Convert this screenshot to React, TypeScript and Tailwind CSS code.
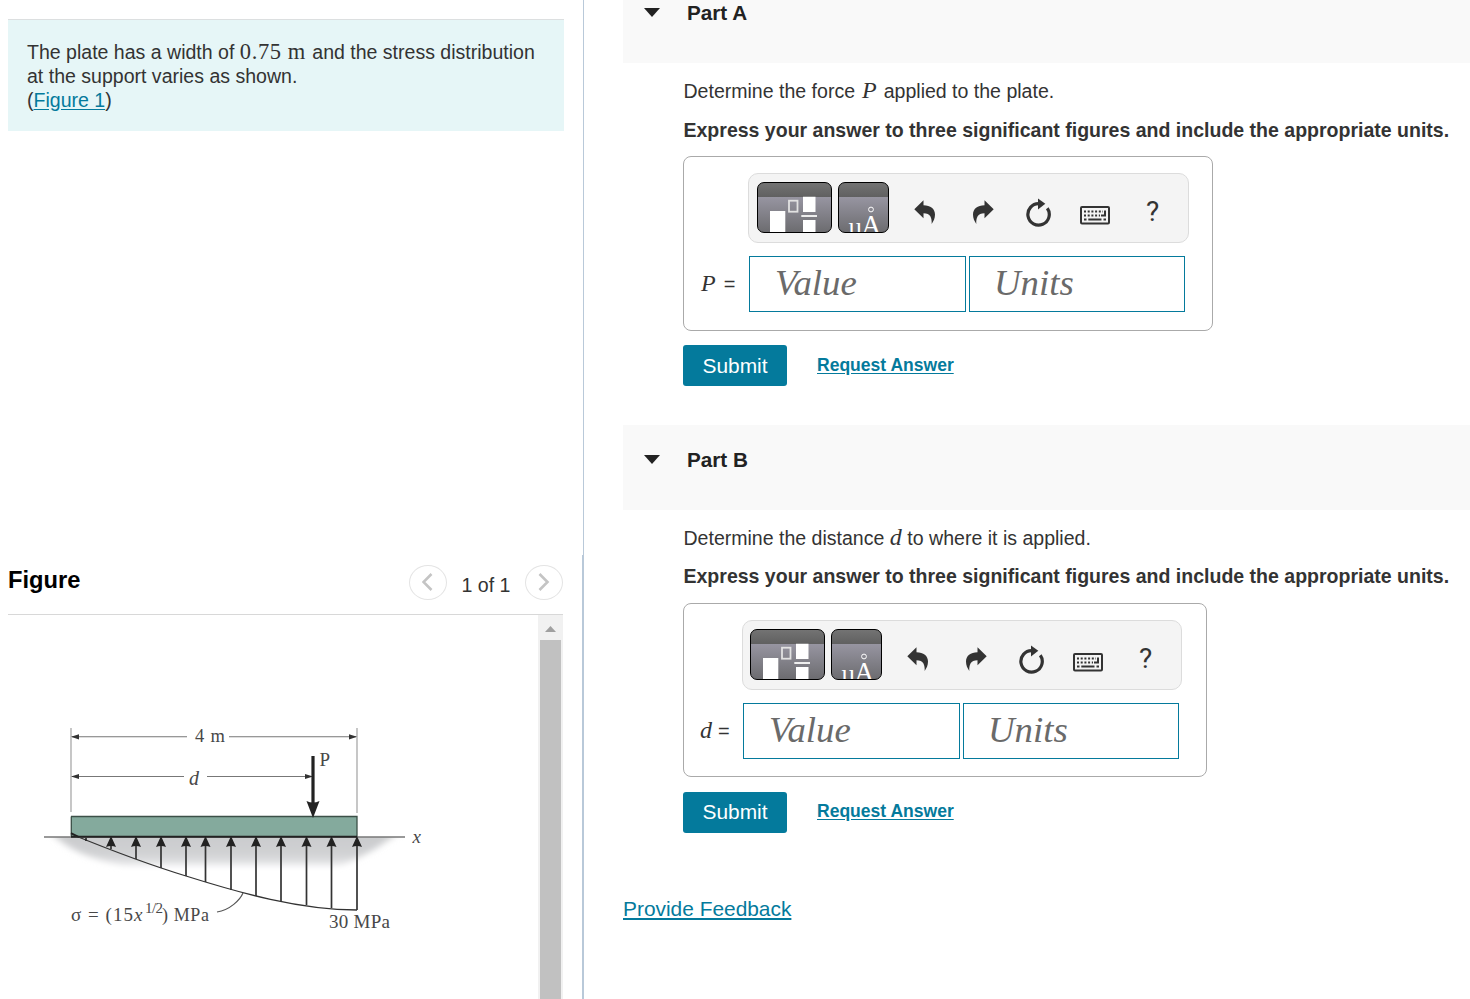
import React, { useState } from 'react';

const arrows = [
  { x: 111, y: 849 },
  { x: 136, y: 859 },
  { x: 161, y: 868 },
  { x: 186, y: 876 },
  { x: 205.5, y: 882 },
  { x: 231, y: 890 },
  { x: 256, y: 896 },
  { x: 281, y: 901 },
  { x: 306.5, y: 905 },
  { x: 331.5, y: 908 },
  { x: 357, y: 910 },
];

function StressDiagram() {
  return (
    <svg width="530" height="384" viewBox="8 615 530 384" className="block" fontFamily="'Liberation Serif', serif" fill="#484848">
      <defs>
        <linearGradient id="ground" x1="0" y1="0" x2="0" y2="1">
          <stop offset="0" stopColor="#c9cacc" />
          <stop offset="0.65" stopColor="#d0d1d3" />
          <stop offset="1" stopColor="#e6e6e8" />
        </linearGradient>
        <filter id="soft" x="-10%" y="-50%" width="120%" height="200%">
          <feGaussianBlur stdDeviation="3" />
        </filter>
        <clipPath id="below">
          <rect x="40" y="837" width="375" height="50" />
        </clipPath>
      </defs>

      <g clipPath="url(#below)">
        <path d="M50 832H400C385 842 368 856 340 865H124C90 860 66 848 50 832Z" fill="url(#ground)" filter="url(#soft)" />
      </g>

      {/* dimension lines */}
      <g stroke="#777" strokeWidth="1.1" fill="none">
        <path d="M71 728V812M357 728V813" stroke="#999" />
        <path d="M72 736.8H187M229 736.8H356M72 776.5H184M207 776.5H312" />
      </g>
      <path d="M71 736.8l8-2.6v5.2zM357 736.8l-8-2.6v5.2zM71 776.5l8-2.6v5.2zM313 776.5l-8-2.6v5.2z" fill="#333" />
      <text x="195" y="742" fontSize="18.500" textLength="30">4 m</text>
      <text x="189" y="785" fontSize="20" fontStyle="italic">d</text>

      {/* plate */}
      <rect x="71" y="816.5" width="286" height="20" fill="#84aa9d" />
      <path d="M71 816.5H357V837M71.3 816.5V836" stroke="#3c5048" strokeWidth="1.3" fill="none" />
      <path d="M44 837H405" stroke="#777" strokeWidth="1.3" />
      <path d="M71 836.8H357" stroke="#222" strokeWidth="2" />
      <text x="412.5" y="843" fontSize="19" fontStyle="italic">x</text>

      {/* force P */}
      <path d="M313 756V804" stroke="#222" strokeWidth="3.2" />
      <path d="M306.5 801Q313 804 319.500 801L313 818Z" fill="#222" />
      <text x="319.500" y="766" fontSize="19">P</text>

      {/* stress distribution */}
      <path d="M71 834C115 852 150 865 186 876C240 893 300 910 357 910" stroke="#333" strokeWidth="1.3" fill="none" />
      <path d="M71 833l8 4M86 838V841" stroke="#222" strokeWidth="1.6" />
      {arrows.map((a) => (
        <g key={a.x}>
          <path d={`M${a.x} 844V${a.y}`} stroke="#333" strokeWidth="1.7" />
          <path d={`M${a.x} 836l5 11q-5 -2 -10 0z`} fill="#222" />
        </g>
      ))}
      <path d="M243 893C240 900 230 910 217 912" stroke="#555" strokeWidth="1.2" fill="none" />
      <text x="71" y="921" fontSize="19" textLength="62">σ = (15</text>
      <text x="134" y="921" fontSize="19" fontStyle="italic">x</text>
      <text x="145" y="913" fontSize="15" textLength="18">1/2</text>
      <text x="162" y="921" fontSize="18" textLength="47">) MPa</text>
      <text x="329" y="928" fontSize="19" textLength="61">30 MPa</text>
    </svg>
  );
}

function Undo({ className = '' }: { className?: string }) {
  return (
    <svg width="22" height="25" viewBox="0 0 22 25" className={className}>
      <path d="M0.300 9.300L9.500 0.300V5.300C16.500 5.300 21 9 21 14.500C21 18.500 19.500 21 17.700 24C18 18 16.500 13.300 9.500 13.300V18.300Z" fill="#333" />
    </svg>
  );
}

function Refresh() {
  return (
    <svg width="26" height="29" viewBox="0 -1 26 29" className="ml-8">
      <path d="M21.300 9.200A10.700 10.700 0 1 1 13 4.700" fill="none" stroke="#333" strokeWidth="3.2" />
      <path d="M12-.5L19.300 4.700L12 10.500Z" fill="#333" />
    </svg>
  );
}

function Keyboard() {
  return (
    <svg width="30" height="19" viewBox="0 0 30 19" className="mt-[5px] ml-7">
      <rect x="1" y="1" width="28" height="16.500" rx="1" fill="none" stroke="#333" strokeWidth="2" />
      <path d="M4 5.500H23M4 9.400H20" stroke="#333" strokeWidth="2" strokeDasharray="2 1.700" />
      <path d="M25 4.500V9.400H21" stroke="#333" strokeWidth="2" fill="none" />
      <path d="M4 13.400h2.500M8.300 13.400H21.500M23.500 13.400H26" stroke="#333" strokeWidth="2" />
    </svg>
  );
}

function Toolbar({ wide }: { wide?: boolean }) {
  return (
    <div
      className={
        wide
          ? 'flex h-[70px] w-[441px] items-start rounded-[10px] border border-[#dcdcdc] bg-[#f4f4f4] pt-2 pl-2 text-[#333]'
          : 'flex h-[70px] w-[440px] items-start rounded-[10px] border border-[#dcdcdc] bg-[#f4f4f4] pt-2 pl-[7px] text-[#333]'
      }
    >
      <button className="h-[51px] w-[75px] overflow-hidden rounded-[7px] border border-black bg-[linear-gradient(#737373_0px,#606060_14px,#9795a1_14px,#6a6a6d_51px)]">
        <svg width="75" height="51" viewBox="1 1 75 51" className="block">
          <path d="M13 29H28.300V52H13ZM46 14.700H58.500V30H46ZM46 38H58.500V52H46Z" fill="#fff" />
          <rect x="32" y="18.700" width="8.500" height="11" fill="none" stroke="#e2e2e2" strokeWidth="1.800" />
          <path d="M44.300 34H60" stroke="#eee" strokeWidth="2" />
        </svg>
      </button>
      <button className="ml-1.5 h-[51px] w-[51px] overflow-hidden rounded-[7px] border border-black bg-[linear-gradient(#737373_0px,#606060_14px,#9795a1_14px,#6a6a6d_51px)]">
        <svg width="51" height="51" viewBox="1 1 51 51" className="block" fill="#fff" fontFamily="'Liberation Serif', serif">
          <text x="10" y="53" fontSize="25">µ</text>
          <text x="23.500" y="51.500" fontSize="27">A</text>
          <circle cx="33" cy="27.500" r="2.400" fill="none" stroke="#fff" strokeWidth="1" />
        </svg>
      </button>
      <div className="flex items-center pt-4">
        <Undo className="-mt-px ml-[25px]" />
        <Undo className="-mt-px ml-[36px] -scale-x-100" />
        <Refresh />
        <Keyboard />
        <span className="-mt-0.5 ml-[36px] font-['Roboto',sans-serif] text-[28px] leading-7">?</span>
      </div>
    </div>
  );
}

type PartProps = {
  symbol: string;
  before: string;
  after: string;
  wide?: boolean;
};

function Part({ symbol, before, after, wide }: PartProps) {
  const [value, setValue] = useState('');
  const [units, setUnits] = useState('');

  return (
    <div className="pl-[60px] text-[#333]">
      <p className="h-[39px] pt-[15px] pl-[0.5px] text-[19.55px] leading-6 whitespace-nowrap">
        {before}
        <i className={wide ? "mx-[7px] font-['Liberation_Serif',serif] text-[24px] leading-6" : "mx-[5.5px] font-['Liberation_Serif',serif] text-[24px] leading-6"}>{symbol}</i>
        {after}
      </p>
      <p className={wide ? 'h-[54px] pt-4 pl-[0.5px] text-[19.53px] leading-6 font-bold whitespace-nowrap' : 'h-[54px] pt-[15px] pl-[0.5px] text-[19.53px] leading-6 font-bold whitespace-nowrap'}>
        Express your answer to three significant figures and include the appropriate units.
      </p>
      <div className={wide ? 'h-[175px] w-[530px] rounded-lg border border-[#aaa] pt-4 pl-[64px]' : 'h-[174px] w-[524px] rounded-lg border border-[#aaa] pt-4 pl-[58px]'}>
        <Toolbar wide={wide} />
        <div className={wide ? 'mt-[13px] -ml-[47px] flex items-center' : 'mt-[13px] -ml-[42px] flex items-center'}>
          <span className={wide ? 'flex w-[48px] items-center pb-0.5' : 'flex w-[43px] items-center pb-0.5'}>
            <i className={wide ? "mr-2 font-['Liberation_Serif',serif] text-[24px] leading-6" : "mr-1.5 font-['Liberation_Serif',serif] text-[24px] leading-6"}>{symbol}</i>
            <span className="mt-0.5 text-[20px] leading-6">=</span>
          </span>
          <input
            value={value}
            onChange={(e) => setValue(e.target.value)}
            placeholder="Value"
            className="h-14 w-[217px] border border-[#047a9c] pb-1 pl-[25px] font-['Liberation_Serif',serif] text-[36.8px] italic placeholder:text-[#6a6a6a]"
          />
          <input
            value={units}
            onChange={(e) => setUnits(e.target.value)}
            placeholder="Units"
            className="ml-[3px] h-14 w-[216px] border border-[#047a9c] pb-1 pl-[24px] font-['Liberation_Serif',serif] text-[36.8px] italic placeholder:text-[#6a6a6a]"
          />
        </div>
      </div>
      <div className={wide ? 'mt-[14px] flex items-center' : 'mt-[15px] flex items-center'}>
        <button className={wide ? 'h-[41px] w-[104px] rounded-[3px] bg-[#047a9c] pt-px text-[20.9px] leading-6 text-white' : 'h-[41px] w-[104px] rounded-[3px] bg-[#047a9c] pb-px text-[20.9px] leading-6 text-white'}>
          Submit
        </button>
        <a href="#" className={wide ? 'ml-[30px] text-[17.55px] font-bold text-[#047a9c] underline underline-offset-2' : '-mt-0.5 ml-[30px] text-[17.55px] font-bold text-[#047a9c] underline underline-offset-2'}>
          Request Answer
        </a>
      </div>
    </div>
  );
}

function Caret() {
  return (
    <svg width="16" height="9" viewBox="0 0 16 9" className="-mt-px mr-[27px]">
      <path d="M0 0H16L8 9Z" fill="#222" />
    </svg>
  );
}

function PagerButton({ d }: { d: string }) {
  return (
    <button className="flex h-[35px] w-[38px] items-center justify-center rounded-[50%] border border-[#e4e4e4]">
      <svg width="12" height="18" viewBox="0 0 12 18" fill="none" stroke="#c4c4c4" strokeWidth="2.6">
        <path d={d} />
      </svg>
    </button>
  );
}

export default function App() {
  return (
    <div className="flex h-[999px] w-[1470px] overflow-hidden bg-white font-['Liberation_Sans',Arial,sans-serif] text-[#333]">
      <div className="flex w-[584px] shrink-0 flex-col">
        <div className="h-[555px] border-r border-[#b9c9d9] pt-[19px] pl-2">
          <div className="h-[112px] w-[556px] border-t border-[#dcdfe0] bg-[#e6f6f7] pt-5 pl-[19px] text-[19.55px] leading-6 whitespace-nowrap">
            The plate has a width of{' '}
            <span className="inline-block h-6 w-[67px] align-top font-['Liberation_Serif',serif] text-[22.5px] leading-6 tracking-[0.6px]">0.75 m</span>
            {' '}and the stress distribution
            <br />
            at the support varies as shown.
            <br />
            (<a href="#" className="text-[#047a9c] underline underline-offset-2">Figure 1</a>)
          </div>
        </div>
        <div className="h-[444px] border-r-2 border-[#b9c9d9] pl-2">
          <div className="flex h-[60px] w-[555px] items-center border-b border-[#d8d8d8] pb-[5px]">
            <h2 className="-mt-0.5 mr-auto text-[23.7px] font-bold text-black">Figure</h2>
            <PagerButton d="M9.500 1L1.500 9L9.500 17" />
            <span className="mt-2 w-[78px] text-center text-[19.6px]">1 of 1</span>
            <PagerButton d="M1.500 1L9.500 9L1.500 17" />
          </div>
          <div className="flex h-[384px]">
            <StressDiagram />
            <div className="flex w-[25px] flex-col items-center bg-[#f1f1f1]">
              <svg width="11" height="6" viewBox="0 0 11 6" className="mt-[11px] mb-[8px]">
                <path d="M5.500 0L11 6H0Z" fill="#a0a0a0" />
              </svg>
              <div className="w-[21px] flex-1 bg-[#c1c1c1]" />
            </div>
          </div>
        </div>
      </div>

      <div className="ml-[39px] w-[847px] shrink-0">
        <div className="flex h-[63px] items-center bg-[#f9f9f9] pb-[37px] pl-[21px]">
          <Caret />
          <h3 className="text-[20.7px] font-bold text-[#222]">Part A</h3>
        </div>
        <Part symbol="P" before="Determine the force" after="applied to the plate." wide />
        <div className="mt-[39px] flex h-[85px] items-center bg-[#f9f9f9] pb-[15px] pl-[21px]">
          <Caret />
          <h3 className="text-[20.7px] font-bold text-[#222]">Part B</h3>
        </div>
        <Part symbol="d" before="Determine the distance" after="to where it is applied." />
        <a href="#" className="mt-[60px] inline-block text-[20.9px] text-[#047a9c] underline underline-offset-2">Provide Feedback</a>
      </div>
    </div>
  );
}
